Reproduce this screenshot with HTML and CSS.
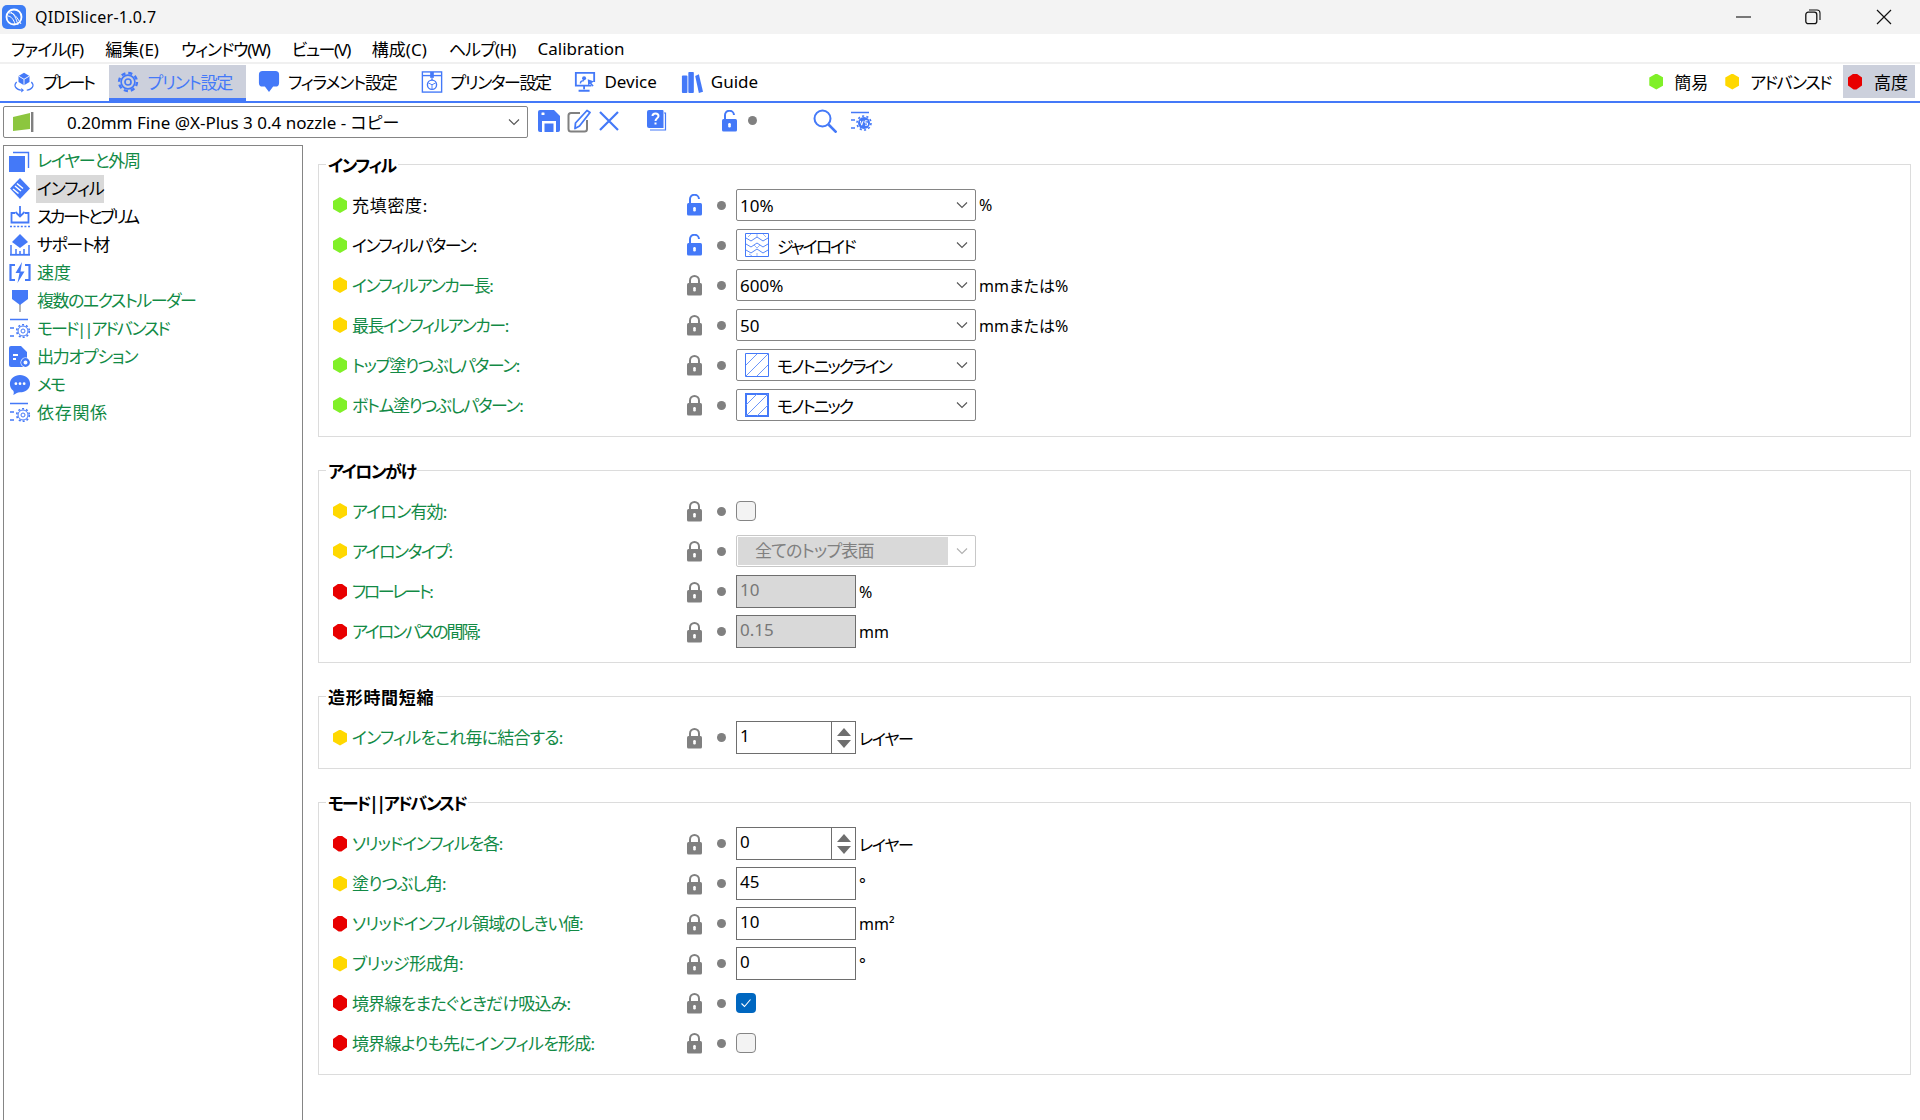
FILE: index.html
```html
<!DOCTYPE html>
<html lang="ja">
<head>
    <meta charset="UTF-8">
    <title>QIDISlicer-1.0.7</title>
    <link rel="stylesheet" href="styles.css">
</head>
<body>
    <svg class="sprites" aria-hidden="true">
        <symbol id="caret" viewBox="0 0 12 8"><path d="M1 1.5 6 6.5 11 1.5" fill="none" stroke="currentColor" stroke-width="1.1"/></symbol>
        <symbol id="lock" viewBox="0 0 17 22"><path d="M4 10V6.5a4.5 4.5 0 0 1 9 0V10" fill="none" stroke="currentColor" stroke-width="2"/><rect x="1" y="9" width="15" height="12.500" rx="1.500" fill="currentColor"/><rect x="7.200" y="13" width="2.600" height="4.500" rx="1.200" fill="#fff"/></symbol>
        <symbol id="unlock" viewBox="0 0 17 22"><path d="M4 10V5.500a4.500 4.500 0 0 1 9 -.5" fill="none" stroke="currentColor" stroke-width="2"/><rect x="1" y="9" width="15" height="12.500" rx="1.500" fill="currentColor"/><rect x="7.200" y="13" width="2.600" height="4.500" rx="1.200" fill="#fff"/></symbol>
        <symbol id="plate" viewBox="0 0 24 24"><path d="M12 2 18 5.500V12L12 15.500 6 12V5.500Z" fill="currentColor"/><path d="M6 5.500 12 9 18 5.500M12 9V15.500" fill="none" stroke="#fff"/><path d="M4 12C0 16 3 20 9 21M20 12C24 16 21 20 15 21" fill="none" stroke="currentColor" stroke-width="1.300"/><path d="M9 18.500 12 21 9 23.500Z" fill="currentColor"/></symbol>
        <symbol id="gear" viewBox="0 0 24 24"><circle cx="12" cy="12" r="7.500" fill="none" stroke="currentColor" stroke-width="1.800"/><circle cx="12" cy="12" r="9.800" fill="none" stroke="currentColor" stroke-width="2.600" stroke-dasharray="4.500 3.200"/><circle cx="12" cy="12" r="3.300" fill="none" stroke="currentColor" stroke-width="1.800"/></symbol>
        <symbol id="bubble" viewBox="0 0 24 26"><path d="M5 1H19A4 4 0 0 1 23 5V14A4 4 0 0 1 19 18H16.500L12 24 7.500 18H5A4 4 0 0 1 1 14V5A4 4 0 0 1 5 1Z" fill="currentColor"/></symbol>
        <symbol id="printer" viewBox="0 0 24 24"><rect x="1.500" y="1" width="21" height="22" fill="none" stroke="currentColor" stroke-width="1.500"/><path d="M1.500 5H22.500" stroke="currentColor" stroke-width="1.500"/><rect x="10" y="1" width="4" height="6.500" fill="currentColor"/><path d="M12 8V10" stroke="currentColor" stroke-width="1.500"/><circle cx="12" cy="15" r="5" fill="none" stroke="currentColor" stroke-width="1.500"/><path d="M8 13 12 15 16 13M12 15V20" fill="none" stroke="currentColor"/></symbol>
        <symbol id="device" viewBox="0 0 24 24"><path d="M19 16H2V2H22V12" fill="none" stroke="currentColor" stroke-width="2"/><path d="M11 16V20M5 21.500H17" stroke="currentColor" stroke-width="2"/><circle cx="11" cy="8" r="2.200" fill="currentColor"/><path d="M7 13.500C7 11 9 10.500 11 10.500" fill="none" stroke="currentColor" stroke-width="1.600"/><path d="M15 9 22 11.500 19 13 21.500 16 20 17 17.500 14 15.500 16Z" fill="currentColor"/></symbol>
        <symbol id="books" viewBox="0 0 24 24"><rect x="1" y="5" width="6" height="19" rx="1" fill="currentColor"/><rect x="8" y="1" width="6" height="23" rx="1" fill="currentColor"/><path d="M15.500 5.500 19.500 3.500 24 22.500 19.500 24Z" fill="currentColor"/></symbol>
        <symbol id="flag" viewBox="0 0 22 20"><path d="M0 5 17 1V17L0 19Z" fill="#8cc63f"/><rect x="18" y="0" width="2.400" height="20" fill="#808080"/></symbol>
        <symbol id="save" viewBox="0 0 22 22"><path d="M2 0H16L22 6V20A2 2 0 0 1 20 22H2A2 2 0 0 1 0 20V2A2 2 0 0 1 2 0Z" fill="currentColor"/><rect x="3.500" y="2.500" width="3" height="2.500" rx=".5" fill="#fff"/><rect x="4" y="11" width="14" height="11" fill="#fff"/><rect x="6.500" y="13.500" width="9" height="8.500" fill="currentColor"/></symbol>
        <symbol id="edit" viewBox="0 0 24 24"><path d="M13 4H4A2.500 2.500 0 0 0 1.500 6.500V20A2.500 2.500 0 0 0 4 22.500H17.500A2.500 2.500 0 0 0 20 20V11" fill="none" stroke="#808080" stroke-width="2"/><path d="M20 1.500 23 3.500 12.500 17 8 19.500 8.500 14Z" fill="#fff" stroke="#4479f8" stroke-width="1.800" stroke-linejoin="round"/></symbol>
        <symbol id="cross" viewBox="0 0 20 20"><path d="M1 1 19 19M19 1 1 19" stroke="currentColor" stroke-width="2.200"/></symbol>
        <symbol id="help" viewBox="0 0 20 21"><path d="M17 3H18.500V20H3" fill="none" stroke="currentColor" stroke-width="1.200"/><path d="M2 0H15.500A1 1 0 0 1 16.500 1V18H2A2 2 0 0 1 0 16V2A2 2 0 0 1 2 0Z" fill="currentColor"/><path d="M5.500 6C5.500 2.500 11.500 2.500 11.500 6 11.500 8.500 8.500 8 8.500 11" fill="none" stroke="#fff" stroke-width="2"/><rect x="7.500" y="12.500" width="2" height="2" fill="#fff"/></symbol>
        <symbol id="search" viewBox="0 0 24 24"><circle cx="9.500" cy="9.500" r="8" fill="none" stroke="currentColor" stroke-width="2"/><path d="M15.500 15.500 23.500 23.500" stroke="currentColor" stroke-width="2.600"/></symbol>
        <symbol id="vsgear" viewBox="0 0 22 20"><path d="M1 1.500H19M1 9H5M1 17H5" stroke="currentColor" stroke-width="1.300"/><circle cx="14" cy="12" r="6" fill="currentColor"/><circle cx="14" cy="12" r="7" fill="none" stroke="currentColor" stroke-width="1.600" stroke-dasharray="2.200 2.200"/><path d="M10.300 9.800 11.700 14.200 13.100 9.800M17.500 9.800H15V12H17.500V14.200H15" fill="none" stroke="#fff"/></symbol>
        <symbol id="layers" viewBox="0 0 22 22"><rect x="0" y="6" width="16" height="16" fill="currentColor"/><path d="M4 2.500H19.500V18" fill="none" stroke="currentColor" stroke-width="1.400"/></symbol>
        <symbol id="infill" viewBox="0 0 22 22"><path d="M11 0 21 10.500 11 21 1 10.500Z" fill="currentColor"/><path d="M6 8 12 13M8 5.500 14 10.500M4 11 9.500 15.500" stroke="#fff" stroke-width="1.500"/></symbol>
        <symbol id="skirt" viewBox="0 0 22 22"><path d="M11 0V10M6.500 6 11 10.500 15.500 6" fill="none" stroke="currentColor" stroke-width="1.800"/><path d="M6 7H2.500V16.500H19.500V7H16" fill="none" stroke="currentColor" stroke-width="1.800"/><path d="M1 20.500H21" stroke="currentColor" stroke-width="1.500" stroke-dasharray="2 1.600"/></symbol>
        <symbol id="support" viewBox="0 0 22 22"><path d="M11 0 19 8 11 14 3 8Z" fill="currentColor"/><path d="M2 21V11M7 21V15M11 21V17M15 21V15M20 21V11" stroke="currentColor" stroke-width="1.500"/><path d="M1 20.800H21" stroke="currentColor" stroke-width="1.800"/></symbol>
        <symbol id="speed" viewBox="0 0 22 22"><path d="M6 3H1.500V18H6M16 3H20.500V18H16" fill="none" stroke="currentColor" stroke-width="2.200"/><path d="M13 0 6.500 11H10.500L8.500 21 15.500 9.500H11.500Z" fill="currentColor"/></symbol>
        <symbol id="extruder" viewBox="0 0 22 22"><rect x="10" y="12" width="2" height="10" fill="#b4b4b4"/><path d="M3 0H19V9L11 15 3 9Z" fill="currentColor"/></symbol>
        <symbol id="mode" viewBox="0 0 22 22"><path d="M1 1.500H19M1 10H5M1 18H5" stroke="currentColor" stroke-width="1.300"/><circle cx="14" cy="13" r="2" fill="none" stroke="currentColor"/><circle cx="14" cy="13" r="5" fill="none" stroke="currentColor"/><circle cx="14" cy="13" r="6.300" fill="none" stroke="currentColor" stroke-width="1.600" stroke-dasharray="2 2"/></symbol>
        <symbol id="output" viewBox="0 0 22 22"><path d="M2 0H12L18 6V13H14V21H2A2 2 0 0 1 0 19V2A2 2 0 0 1 2 0Z" fill="currentColor"/><path d="M4 9H9M4 13H7" stroke="#fff" stroke-width="1.800"/><circle cx="16.500" cy="16.500" r="5" fill="#fff"/><circle cx="16.500" cy="16.500" r="3.200" fill="none" stroke="currentColor" stroke-width="2.400"/></symbol>
        <symbol id="memo" viewBox="0 0 24 24"><path d="M12 1C18 1 23 5 23 10.500S18 20 12 20C9 20 7 22 4.500 23 5.500 21.500 5.500 19 4.500 18 2 16 1 13.500 1 10.500 1 5 6 1 12 1Z" fill="currentColor"/><circle cx="7.500" cy="10.500" r="1.500" fill="#fff"/><circle cx="12" cy="10.500" r="1.500" fill="#fff"/><circle cx="16.500" cy="10.500" r="1.500" fill="#fff"/></symbol>
        <symbol id="gyroid" viewBox="0 0 24 24"><path d="M.5.500H23.500V23.500H.5Z" fill="#fff" stroke="#4479f8"/><path d="M1 5 6 8 12 4 18 8 23 5M1 11 6 14 12 10 18 14 23 11M1 17 6 20 12 16 18 20 23 17" fill="none" stroke="#4479f8" stroke-width=".9"/><path d="M6 1 3 4M18 1 21 4M12 20V23M4 21 7 23M12 1V4M9 12 12 15M15 12 12 15" stroke="#7ea2fb" stroke-width=".8"/></symbol>
        <symbol id="mono" viewBox="0 0 24 24"><path d="M.5.500H23.500V23.500H.5Z" fill="#fff" stroke="#4479f8"/><path d="M1 12 12 1M1 23 23 1M12 23 23 12" stroke="#6c96fa"/></symbol>
        <symbol id="monob" viewBox="0 0 24 24"><path d="M1 1H23V23H1Z" fill="#fff" stroke="#4479f8" stroke-width="2"/><path d="M1 12 12 1M1 23 23 1M12 23 23 12" stroke="#6c96fa"/></symbol>
    </svg>

    <div class="titlebar">
        <svg class="logo" viewBox="0 0 24 24"><rect width="24" height="24" rx="5" fill="#3d7df5"/><circle cx="12" cy="12" r="7.500" fill="none" stroke="#fff" stroke-width="1.800"/><path d="M7 8C11 7 15 12 19 19M9 7C12 9 14 13 16 20M6 11C9 11 12 15 13 19" fill="none" stroke="#fff"/></svg>
        <span class="app-name">QIDISlicer-1.0.7</span>
        <div class="win-btns">
            <svg class="win-btn" viewBox="0 0 16 16"><path d="M0 8H15" stroke="#111" stroke-width="1.100"/></svg>
            <svg class="win-btn" viewBox="0 0 16 16"><rect x=".8" y="3.200" width="11" height="11.500" rx="2.500" fill="none" stroke="#111" stroke-width="1.300"/><path d="M4 1H12A3 3 0 0 1 15 4V11" fill="none" stroke="#111" stroke-width="1.100"/></svg>
            <svg class="win-btn" viewBox="0 0 16 16"><path d="M1 1 15 15M15 1 1 15" stroke="#111" stroke-width="1.200"/></svg>
        </div>
    </div>

    <div class="menubar">
        <span class="menu-item">ファイル(F)</span>
        <span class="menu-item t1">編集(E)</span>
        <span class="menu-item t3">ウィンドウ(W)</span>
        <span class="menu-item t4">ビュー(V)</span>
        <span class="menu-item t1">構成(C)</span>
        <span class="menu-item">ヘルプ(H)</span>
        <span class="menu-item t1">Calibration</span>
    </div>

    <div class="tabbar">
        <div class="tab t6"><svg class="tab-icon"><use href="#plate"/></svg>プレート</div>
        <div class="tab active t3"><svg class="tab-icon"><use href="#gear"/></svg>プリント設定</div>
        <div class="tab t3"><svg class="tab-icon"><use href="#bubble"/></svg>フィラメント設定</div>
        <div class="tab t4"><svg class="tab-icon"><use href="#printer"/></svg>プリンター設定</div>
        <div class="tab t1"><svg class="tab-icon"><use href="#device"/></svg>Device</div>
        <div class="tab t1"><svg class="tab-icon"><use href="#books"/></svg>Guide</div>
        <div class="modes">
            <div class="mode t1"><span class="hex green"></span>簡易</div>
            <div class="mode t4"><span class="hex yellow"></span>アドバンスド</div>
            <div class="mode current t1"><span class="hex red"></span>高度</div>
        </div>
    </div>

    <div class="toolbar">
        <div class="preset">
            <svg class="preset-flag"><use href="#flag"/></svg>
            <span class="preset-name">0.20mm Fine @X-Plus 3 0.4 nozzle - コピー</span>
            <svg class="caret"><use href="#caret"/></svg>
        </div>
        <svg class="tool save"><use href="#save"/></svg>
        <svg class="tool edit"><use href="#edit"/></svg>
        <svg class="tool cross"><use href="#cross"/></svg>
        <svg class="tool help"><use href="#help"/></svg>
        <svg class="tool toollock"><use href="#unlock"/></svg>
        <span class="dot tooldot"></span>
        <svg class="tool search"><use href="#search"/></svg>
        <svg class="tool vs"><use href="#vsgear"/></svg>
    </div>

    <div class="main">
        <div class="sidebar">
            <div class="side-item"><svg class="side-icon"><use href="#layers"/></svg><span class="side-text sys t3">レイヤーと外周</span></div>
            <div class="side-item"><svg class="side-icon"><use href="#infill"/></svg><span class="side-text selected t3">インフィル</span></div>
            <div class="side-item"><svg class="side-icon"><use href="#skirt"/></svg><span class="side-text t6">スカートとブリム</span></div>
            <div class="side-item"><svg class="side-icon"><use href="#support"/></svg><span class="side-text t4">サポート材</span></div>
            <div class="side-item"><svg class="side-icon"><use href="#speed"/></svg><span class="side-text sys t1">速度</span></div>
            <div class="side-item"><svg class="side-icon"><use href="#extruder"/></svg><span class="side-text sys t4">複数のエクストルーダー</span></div>
            <div class="side-item"><svg class="side-icon"><use href="#mode"/></svg><span class="side-text sys t5">モード||アドバンスド</span></div>
            <div class="side-item"><svg class="side-icon"><use href="#output"/></svg><span class="side-text sys t3">出力オプション</span></div>
            <div class="side-item"><svg class="side-icon"><use href="#memo"/></svg><span class="side-text sys t5">メモ</span></div>
            <div class="side-item"><svg class="side-icon"><use href="#mode"/></svg><span class="side-text sys t0">依存関係</span></div>
        </div>

        <div class="content">
            <div class="group">
                <h3 class="group-title t4">インフィル</h3>
                <div class="row">
                    <span class="hex green"></span><span class="label black t0">充填密度:</span>
                    <svg class="lock open"><use href="#unlock"/></svg><span class="dot"></span>
                    <div class="ctl"><div class="combo">10%<svg class="caret"><use href="#caret"/></svg></div><span class="unit">%</span></div>
                </div>
                <div class="row">
                    <span class="hex green"></span><span class="label black t4">インフィルパターン:</span>
                    <svg class="lock open"><use href="#unlock"/></svg><span class="dot"></span>
                    <div class="ctl"><div class="combo with-icon"><svg class="pattern"><use href="#gyroid"/></svg>ジャイロイド<svg class="caret"><use href="#caret"/></svg></div></div>
                </div>
                <div class="row">
                    <span class="hex yellow"></span><span class="label t4">インフィルアンカー長:</span>
                    <svg class="lock"><use href="#lock"/></svg><span class="dot"></span>
                    <div class="ctl"><div class="combo">600%<svg class="caret"><use href="#caret"/></svg></div><span class="unit">mmまたは%</span></div>
                </div>
                <div class="row">
                    <span class="hex yellow"></span><span class="label t4">最長インフィルアンカー:</span>
                    <svg class="lock"><use href="#lock"/></svg><span class="dot"></span>
                    <div class="ctl"><div class="combo">50<svg class="caret"><use href="#caret"/></svg></div><span class="unit">mmまたは%</span></div>
                </div>
                <div class="row">
                    <span class="hex green"></span><span class="label t4">トップ塗りつぶしパターン:</span>
                    <svg class="lock"><use href="#lock"/></svg><span class="dot"></span>
                    <div class="ctl"><div class="combo with-icon"><svg class="pattern"><use href="#mono"/></svg>モノトニックライン<svg class="caret"><use href="#caret"/></svg></div></div>
                </div>
                <div class="row">
                    <span class="hex green"></span><span class="label t4">ボトム塗りつぶしパターン:</span>
                    <svg class="lock"><use href="#lock"/></svg><span class="dot"></span>
                    <div class="ctl"><div class="combo with-icon"><svg class="pattern"><use href="#monob"/></svg>モノトニック<svg class="caret"><use href="#caret"/></svg></div></div>
                </div>
            </div>

            <div class="group">
                <h3 class="group-title t4">アイロンがけ</h3>
                <div class="row">
                    <span class="hex yellow"></span><span class="label">アイロン有効:</span>
                    <svg class="lock"><use href="#lock"/></svg><span class="dot"></span>
                    <div class="ctl"><span class="check"></span></div>
                </div>
                <div class="row">
                    <span class="hex yellow"></span><span class="label t4">アイロンタイプ:</span>
                    <svg class="lock"><use href="#lock"/></svg><span class="dot"></span>
                    <div class="ctl"><div class="combo disabled"><span class="disabled-fill">全てのトップ表面</span><svg class="caret"><use href="#caret"/></svg></div></div>
                </div>
                <div class="row">
                    <span class="hex red"></span><span class="label t6">フローレート:</span>
                    <svg class="lock"><use href="#lock"/></svg><span class="dot"></span>
                    <div class="ctl"><div class="input off">10</div><span class="unit">%</span></div>
                </div>
                <div class="row">
                    <span class="hex red"></span><span class="label t5">アイロンパスの間隔:</span>
                    <svg class="lock"><use href="#lock"/></svg><span class="dot"></span>
                    <div class="ctl"><div class="input off">0.15</div><span class="unit">mm</span></div>
                </div>
            </div>

            <div class="group">
                <h3 class="group-title t0">造形時間短縮</h3>
                <div class="row">
                    <span class="hex yellow"></span><span class="label">インフィルをこれ毎に結合する:</span>
                    <svg class="lock"><use href="#lock"/></svg><span class="dot"></span>
                    <div class="ctl"><div class="input">1<span class="spin"><i class="up"></i><i class="down"></i></span></div><span class="unit t3">レイヤー</span></div>
                </div>
            </div>

            <div class="group">
                <h3 class="group-title t5">モード||アドバンスド</h3>
                <div class="row">
                    <span class="hex red"></span><span class="label t3">ソリッドインフィルを各:</span>
                    <svg class="lock"><use href="#lock"/></svg><span class="dot"></span>
                    <div class="ctl"><div class="input">0<span class="spin"><i class="up"></i><i class="down"></i></span></div><span class="unit t3">レイヤー</span></div>
                </div>
                <div class="row">
                    <span class="hex yellow"></span><span class="label">塗りつぶし角:</span>
                    <svg class="lock"><use href="#lock"/></svg><span class="dot"></span>
                    <div class="ctl"><div class="input">45</div><span class="unit">°</span></div>
                </div>
                <div class="row">
                    <span class="hex red"></span><span class="label">ソリッドインフィル領域のしきい値:</span>
                    <svg class="lock"><use href="#lock"/></svg><span class="dot"></span>
                    <div class="ctl"><div class="input">10</div><span class="unit">mm²</span></div>
                </div>
                <div class="row">
                    <span class="hex yellow"></span><span class="label t7">ブリッジ形成角:</span>
                    <svg class="lock"><use href="#lock"/></svg><span class="dot"></span>
                    <div class="ctl"><div class="input">0</div><span class="unit">°</span></div>
                </div>
                <div class="row">
                    <span class="hex red"></span><span class="label">境界線をまたぐときだけ吸込み:</span>
                    <svg class="lock"><use href="#lock"/></svg><span class="dot"></span>
                    <div class="ctl"><span class="check on"><svg viewBox="0 0 20 20"><path d="M5.500 10.500 8.500 13.500 14.500 6.500" fill="none" stroke="#fff" stroke-width="1.100"/></svg></span></div>
                </div>
                <div class="row">
                    <span class="hex red"></span><span class="label">境界線よりも先にインフィルを形成:</span>
                    <svg class="lock"><use href="#lock"/></svg><span class="dot"></span>
                    <div class="ctl"><span class="check"></span></div>
                </div>
            </div>
        </div>
    </div>
</body>
</html>
```

FILE: styles.css
```css
* {
    box-sizing: border-box;
}
body {
    margin: 0;
    height: 1120px;
    overflow: hidden;
    display: flex;
    flex-direction: column;
    background-color: #ffffff;
    color: #000000;
    font-family: "Noto Sans", "Noto Sans CJK JP", sans-serif;
    font-size: 16px;
    font-feature-settings: "palt";
}
.sprites {
    display: none;
}

.label, .side-text, .tab, .menu-item, .mode, .group-title {
    font-size: 17px;
    letter-spacing: -0.8px;
}

/* title bar */
.titlebar {
    height: 34px;
    background-color: #f3f3f3;
    display: flex;
    align-items: center;
    padding-left: 2px;
}
.logo {
    width: 24px;
    height: 24px;
}
.app-name {
    margin-left: 9px;
    letter-spacing: 0.3px;
}
.win-btns {
    margin-left: auto;
    display: flex;
    gap: 55px;
    padding-right: 28px;
}
.win-btn {
    width: 16px;
    height: 16px;
}
.win-btn:first-child {
    margin-right: -2px;
}

/* menu */
.menubar {
    height: 30px;
    border-bottom: 2px solid #f0f0f0;
    display: flex;
    align-items: center;
}
.menu-item {
    padding: 0 11px;
}

/* tabs */
.tabbar {
    height: 39px;
    border-bottom: 2px solid #4479f8;
    display: flex;
    gap: 4px;
    padding: 1px 5px 0;
}
.tab {
    height: 36px;
    padding: 0 12px 3px 8px;
    display: flex;
    align-items: center;
    gap: 8px;
}
.tab.active {
    background-color: #ccd0dc;
    color: #4479f8;
    border-bottom: 3px solid #4479f8;
    padding: 0 14px 0 8px;
}
.tab-icon {
    width: 22px;
    height: 24px;
    color: #4479f8;
}
.modes {
    margin-left: auto;
    display: flex;
    height: 33px;
}
.mode {
    display: flex;
    align-items: center;
    gap: 11px;
    padding: 0 5px;
    margin-right: 7px;
}
.mode.current {
    background-color: #ccd0dc;
    width: 72px;
    margin: 0;
    padding-right: 0;
    gap: 12px;
}

/* shared bits */
.hex {
    display: block;
    width: 14px;
    height: 16px;
    clip-path: polygon(50% 0, 100% 25%, 100% 75%, 50% 100%, 0 75%, 0 25%);
}
.hex.green {
    background-color: #80f028;
}
.hex.yellow {
    background-color: #ffd800;
}
.hex.red {
    background-color: #e80000;
    clip-path: polygon(40% 0, 60% 0, 100% 25%, 100% 75%, 60% 100%, 40% 100%, 0 75%, 0 25%);
}
.dot {
    display: block;
    width: 9px;
    height: 9px;
    border-radius: 50%;
    background-color: #808080;
}
.caret {
    width: 12px;
    height: 8px;
    color: #555555;
    margin-left: auto;
    flex: none;
}

/* preset toolbar */
.toolbar {
    height: 31px;
    margin-top: 3px;
    padding-left: 3px;
    display: flex;
    align-items: center;
    color: #4479f8;
}
.preset {
    width: 525px;
    height: 32px;
    border: 1px solid #858585;
    border-radius: 2px;
    display: flex;
    align-items: center;
    padding: 0 7px 0 9px;
}
.preset-flag {
    width: 22px;
    height: 20px;
}
.preset-name {
    margin-left: 32px;
    color: #000000;
    font-size: 17px;
}
.tool {
    display: block;
    flex: none;
    margin-bottom: 2px;
}
.save {
    width: 22px;
    height: 22px;
    margin-left: 10px;
}
.edit {
    width: 24px;
    height: 24px;
    margin-left: 7px;
}
.cross {
    width: 20px;
    height: 20px;
    margin-left: 8px;
}
.help {
    width: 20px;
    height: 21px;
    margin-left: 28px;
}
.toollock {
    width: 17px;
    height: 22px;
    margin-left: 54px;
}
.tooldot {
    margin-left: 10px;
    margin-top: -2px;
}
.search {
    width: 24px;
    height: 24px;
    margin-left: 56px;
}
.vs {
    width: 22px;
    height: 20px;
    margin-left: 13px;
}

/* main area */
.main {
    flex: 1;
    display: flex;
    margin-top: 8px;
    padding-left: 3px;
}
.sidebar {
    width: 300px;
    border: 1px solid #858585;
    border-bottom: none;
    padding: 1px 0 0 5px;
}
.side-item {
    height: 28px;
    display: flex;
    align-items: center;
    gap: 5px;
}
.side-icon {
    width: 22px;
    height: 22px;
    color: #4479f8;
    flex: none;
}
.side-text {
    height: 28px;
    line-height: 28px;
    padding: 0 1px;
}
.side-text.sys {
    color: #128a45;
}
.side-text.selected {
    background-color: #d9d9d9;
}

/* settings */
.content {
    width: 1593px;
    margin-left: 15px;
    padding-top: 19px;
}
.group {
    border: 1px solid #dcdcdc;
    margin-bottom: 33px;
    padding: 13px 0 15px;
}
.group-title {
    display: table;
    height: 24px;
    margin: -24px 0 -2px 7px;
    padding: 0 2px;
    background-color: #ffffff;
    line-height: 24px;
    font-weight: 700;
}
.row {
    height: 32px;
    margin-top: 8px;
    padding-left: 14px;
    display: grid;
    grid-template-columns: 19px 334px 31px 19px auto;
    align-items: center;
}
.group-title + .row {
    margin-top: 13px;
}
.label {
    color: #128a45;
    padding-bottom: 2px;
}
.label.black {
    color: #000000;
}
.lock {
    width: 17px;
    height: 22px;
    color: #808080;
}
.lock.open {
    color: #4479f8;
}
.ctl {
    display: flex;
    align-items: center;
}
.combo {
    width: 240px;
    height: 32px;
    border: 1px solid #858585;
    border-radius: 2px;
    display: flex;
    align-items: center;
    padding: 0 7px 0 3px;
    gap: 8px;
    font-size: 17px;
}
.combo.with-icon {
    padding-left: 8px;
    letter-spacing: -2px;
}
.pattern {
    width: 24px;
    height: 24px;
    flex: none;
}
.combo.disabled {
    border-color: #c8c8c8;
    padding: 1px 7px 1px 1px;
    color: #808080;
    letter-spacing: -0.8px;
}
.combo.disabled .caret {
    color: #b0b0b0;
}
.disabled-fill {
    width: 210px;
    height: 100%;
    background-color: #d9d9d9;
    padding-left: 17px;
    line-height: 27px;
}
.input {
    width: 120px;
    height: 33px;
    border: 1px solid #6e6e6e;
    padding-left: 3px;
    line-height: 28px;
    font-size: 17px;
    display: flex;
}
.input.off {
    background-color: #d9d9d9;
    color: #777777;
}
.spin {
    margin-left: auto;
    width: 24px;
    height: 31px;
    border-left: 1px solid #6e6e6e;
    display: flex;
    flex-direction: column;
    align-items: center;
    justify-content: center;
    gap: 4px;
}
.spin i {
    width: 0;
    height: 0;
    border-left: 7px solid transparent;
    border-right: 7px solid transparent;
}
.spin .up {
    border-bottom: 8px solid #6e6e6e;
}
.spin .down {
    border-top: 8px solid #6e6e6e;
}
.unit {
    margin-left: 3px;
}
.check {
    display: block;
    width: 20px;
    height: 20px;
    border: 1px solid #858585;
    border-radius: 4px;
    background-color: #f3f3f3;
}
.check.on {
    border: none;
    background-color: #0067c0;
}
.check svg {
    display: block;
    width: 20px;
    height: 20px;
}

/* letter spacing per text, the kana and kanji mix differs */
.t0 { letter-spacing: 0.7px; }
.t1 { letter-spacing: 0; }
.t3 { letter-spacing: -1.2px; }
.t4 { letter-spacing: -1.5px; }
.t5 { letter-spacing: -2.1px; }
.t6 { letter-spacing: -2.5px; }
.t7 { letter-spacing: -0.4px; }
```
